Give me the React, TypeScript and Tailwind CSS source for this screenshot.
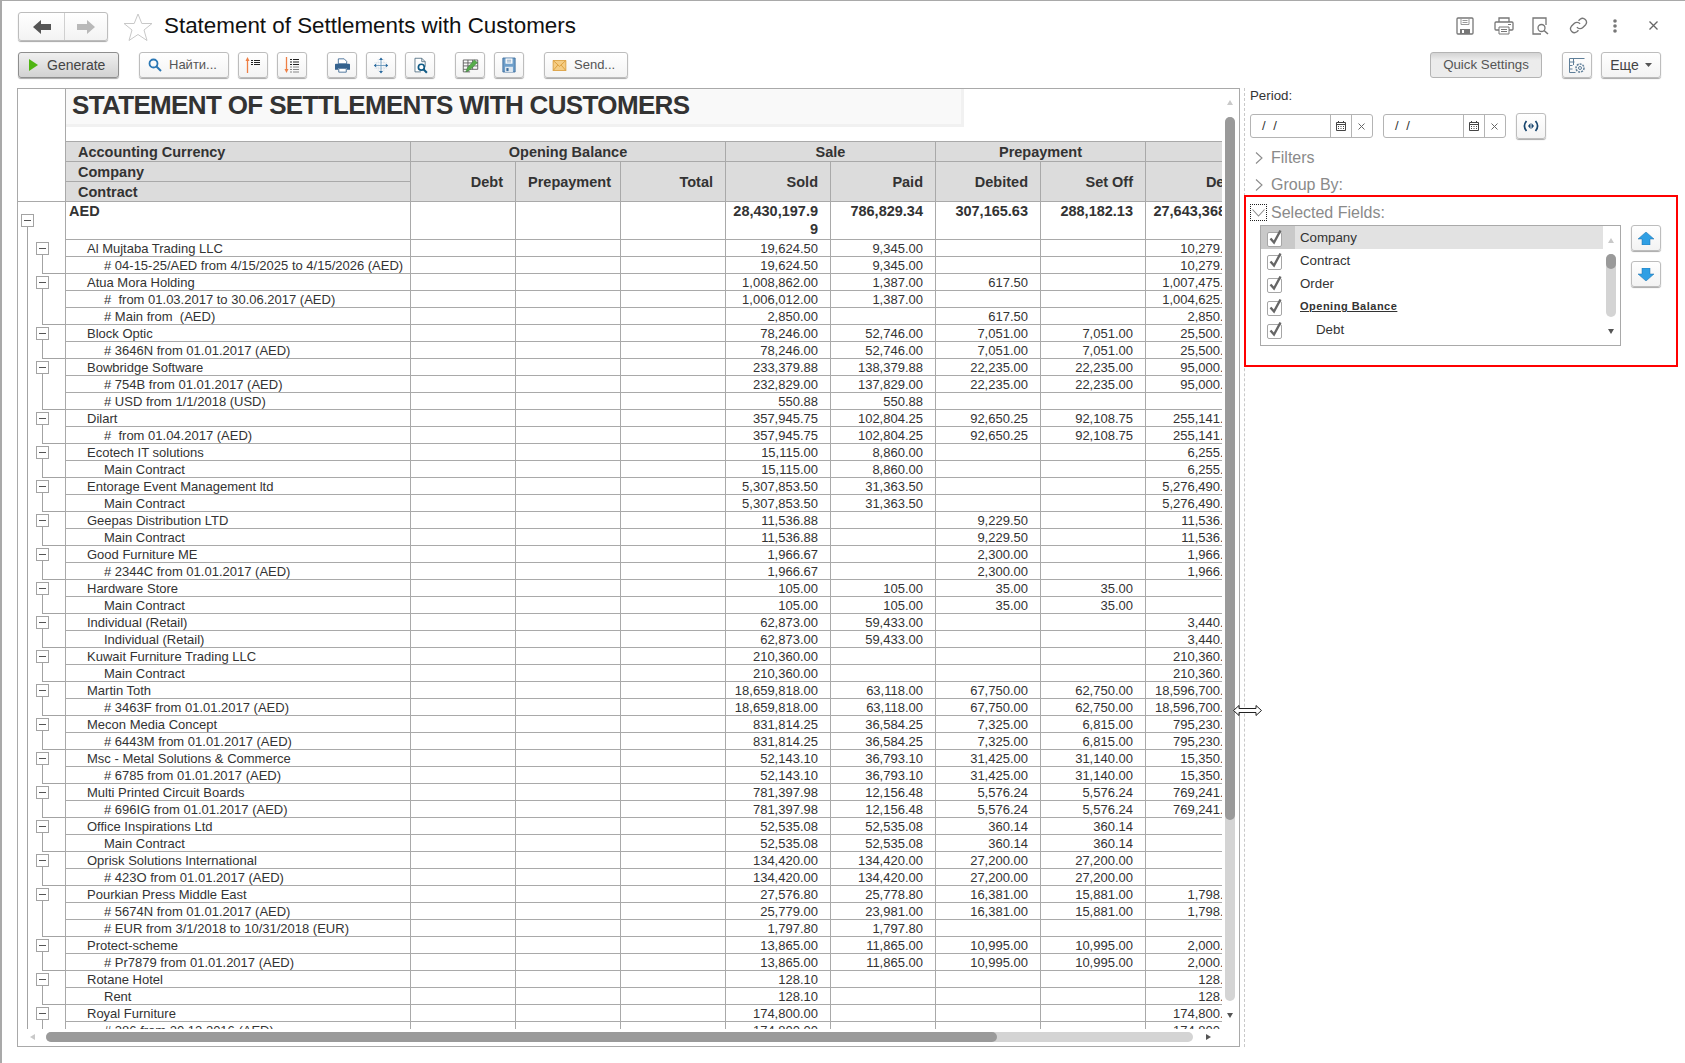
import type { ReactNode } from "react";

type Vals = [string, string, string, string, string];
type Group = { name: string; vals: Vals; kids: [string, Vals?][] };

const GROUPS: Group[] = [
  { name: "Al Mujtaba Trading LLC", vals: ["19,624.50", "9,345.00", "", "", "10,279.50"], kids: [["# 04-15-25/AED from 4/15/2025 to 4/15/2026 (AED)"]] },
  {
    name: "Atua Mora Holding",
    vals: ["1,008,862.00", "1,387.00", "617.50", "", "1,007,475.00"],
    kids: [
      ["#  from 01.03.2017 to 30.06.2017 (AED)", ["1,006,012.00", "1,387.00", "", "", "1,004,625.00"]],
      ["# Main from  (AED)", ["2,850.00", "", "617.50", "", "2,850.00"]],
    ],
  },
  { name: "Block Optic", vals: ["78,246.00", "52,746.00", "7,051.00", "7,051.00", "25,500.00"], kids: [["# 3646N from 01.01.2017 (AED)"]] },
  {
    name: "Bowbridge Software",
    vals: ["233,379.88", "138,379.88", "22,235.00", "22,235.00", "95,000.00"],
    kids: [
      ["# 754B from 01.01.2017 (AED)", ["232,829.00", "137,829.00", "22,235.00", "22,235.00", "95,000.00"]],
      ["# USD from 1/1/2018 (USD)", ["550.88", "550.88", "", "", ""]],
    ],
  },
  { name: "Dilart", vals: ["357,945.75", "102,804.25", "92,650.25", "92,108.75", "255,141.50"], kids: [["#  from 01.04.2017 (AED)"]] },
  { name: "Ecotech IT solutions", vals: ["15,115.00", "8,860.00", "", "", "6,255.00"], kids: [["Main Contract"]] },
  { name: "Entorage Event Management ltd", vals: ["5,307,853.50", "31,363.50", "", "", "5,276,490.00"], kids: [["Main Contract"]] },
  { name: "Geepas Distribution LTD", vals: ["11,536.88", "", "9,229.50", "", "11,536.88"], kids: [["Main Contract"]] },
  { name: "Good Furniture ME", vals: ["1,966.67", "", "2,300.00", "", "1,966.67"], kids: [["# 2344C from 01.01.2017 (AED)"]] },
  { name: "Hardware Store", vals: ["105.00", "105.00", "35.00", "35.00", ""], kids: [["Main Contract"]] },
  { name: "Individual (Retail)", vals: ["62,873.00", "59,433.00", "", "", "3,440.00"], kids: [["Individual (Retail)"]] },
  { name: "Kuwait Furniture Trading LLC", vals: ["210,360.00", "", "", "", "210,360.00"], kids: [["Main Contract"]] },
  { name: "Martin Toth", vals: ["18,659,818.00", "63,118.00", "67,750.00", "62,750.00", "18,596,700.00"], kids: [["# 3463F from 01.01.2017 (AED)"]] },
  { name: "Mecon Media Concept", vals: ["831,814.25", "36,584.25", "7,325.00", "6,815.00", "795,230.00"], kids: [["# 6443M from 01.01.2017 (AED)"]] },
  { name: "Msc - Metal Solutions & Commerce", vals: ["52,143.10", "36,793.10", "31,425.00", "31,140.00", "15,350.00"], kids: [["# 6785 from 01.01.2017 (AED)"]] },
  { name: "Multi Printed Circuit Boards", vals: ["781,397.98", "12,156.48", "5,576.24", "5,576.24", "769,241.50"], kids: [["# 696IG from 01.01.2017 (AED)"]] },
  { name: "Office Inspirations Ltd", vals: ["52,535.08", "52,535.08", "360.14", "360.14", ""], kids: [["Main Contract"]] },
  { name: "Oprisk Solutions International", vals: ["134,420.00", "134,420.00", "27,200.00", "27,200.00", ""], kids: [["# 423O from 01.01.2017 (AED)"]] },
  {
    name: "Pourkian Press Middle East",
    vals: ["27,576.80", "25,778.80", "16,381.00", "15,881.00", "1,798.00"],
    kids: [
      ["# 5674N from 01.01.2017 (AED)", ["25,779.00", "23,981.00", "16,381.00", "15,881.00", "1,798.00"]],
      ["# EUR from 3/1/2018 to 10/31/2018 (EUR)", ["1,797.80", "1,797.80", "", "", ""]],
    ],
  },
  { name: "Protect-scheme", vals: ["13,865.00", "11,865.00", "10,995.00", "10,995.00", "2,000.00"], kids: [["# Pr7879 from 01.01.2017 (AED)"]] },
  { name: "Rotane Hotel", vals: ["128.10", "", "", "", "128.10"], kids: [["Rent"]] },
  { name: "Royal Furniture", vals: ["174,800.00", "", "", "", "174,800.00"], kids: [["# 386 from 20.12.2016 (AED)"]] },
];

const LINE = "border-[#a9a9a9]";
const HEAD = `bg-[#dcdcdc] border-r border-b ${LINE} px-[12px] py-0 font-bold text-[14.5px] leading-[16px] text-[#333]`;
const CELL = `border-r border-b ${LINE} h-[17px] p-0 pr-[12px] pl-[4px] text-right text-[13px] leading-[15px] text-[#333] whitespace-nowrap overflow-hidden`;
const TOTAL = `border-r border-b ${LINE} h-[38px] p-0 pr-[12px] pl-[7px] align-top text-right font-bold text-[14.5px] leading-[18px] text-[#333] break-all`;

function Btn({ className = "", children }: { className?: string; children: ReactNode }) {
  return (
    <div
      className={`flex h-[26px] shrink-0 items-center justify-center rounded-[3px] border border-[#bdbdbd] bg-gradient-to-b from-white to-[#f3f3f3] shadow-[0_1px_1px_#a8a8a8] ${className}`}
    >
      {children}
    </div>
  );
}

function TreeLines() {
  const box = (y: number, x: number, key: string) => (
    <g key={key}>
      <rect x={x + 0.5} y={y - 5.5} width={12} height={12} rx={1} fill="#fff" stroke="#a3a3a3" />
      <path d={`M${x + 3} ${y + 0.5}h7`} stroke="#555" />
    </g>
  );
  const parts: ReactNode[] = [];
  let top = 151;
  GROUPS.forEach((g, i) => {
    const h = 17 * (g.kids.length + 1);
    parts.push(<path key={`l${i}`} d={`M24.5 ${top + 8}V${top + h - 0.5}H47`} stroke="#a3a3a3" fill="none" />);
    parts.push(box(top + 8, 18, `b${i}`));
    top += h;
  });
  return (
    <svg className="absolute left-0 top-0" width="47" height="940" shapeRendering="crispEdges">
      <path d="M9.5 137V940" stroke="#a3a3a3" />
      {parts}
      {box(131, 3, "root")}
    </svg>
  );
}

function NumCells({ vals }: { vals: Vals }) {
  return (
    <>
      <td className={CELL} />
      <td className={CELL} />
      <td className={CELL} />
      {vals.map((v, i) => (
        <td key={i} className={CELL}>
          {v}
        </td>
      ))}
    </>
  );
}

function ReportTable() {
  return (
    <table className="w-[1233px] table-fixed border-separate border-spacing-0">
      <colgroup>
        <col className="w-[48px]" />
        <col className="w-[345px]" />
        {[0, 1, 2, 3, 4, 5, 6, 7].map((i) => (
          <col key={i} className="w-[105px]" />
        ))}
      </colgroup>
      <tbody>
        <tr>
          <td rowSpan={4} className={`border-r border-b ${LINE} p-0`} />
          <td colSpan={9} className={`h-[53px] p-0 align-top border-b ${LINE}`}>
            <div className="h-[38px] w-[898px] border-r-[3px] border-b-[3px] border-[#f1f1f1] bg-[#f9f9f9] pl-[6px] text-[26px] font-bold leading-[33px] tracking-[-0.65px] text-[#333]">
              STATEMENT OF SETTLEMENTS WITH CUSTOMERS
            </div>
          </td>
        </tr>
        <tr className="h-[20px]">
          <td className={`${HEAD} text-left`}>Accounting Currency</td>
          <td colSpan={3} className={`${HEAD} text-center`}>Opening Balance</td>
          <td colSpan={2} className={`${HEAD} text-center`}>Sale</td>
          <td colSpan={2} className={`${HEAD} text-center`}>Prepayment</td>
          <td className={HEAD} />
        </tr>
        <tr className="h-[20px]">
          <td className={`${HEAD} text-left`}>Company</td>
          {["Debt", "Prepayment", "Total", "Sold", "Paid", "Debited", "Set Off", "Debt"].map((h, i) => (
            <td key={i} rowSpan={2} className={`${HEAD} text-right`}>
              {h}
            </td>
          ))}
        </tr>
        <tr className="h-[20px]">
          <td className={`${HEAD} text-left`}>Contract</td>
        </tr>
        <tr>
          <td className={`border-r ${LINE} p-0`} />
          <td className={`border-r border-b ${LINE} h-[38px] p-0 pl-[3px] align-top text-[14.5px] font-bold leading-[18px] text-[#333]`}>AED</td>
          <td className={TOTAL} />
          <td className={TOTAL} />
          <td className={TOTAL} />
          <td className={TOTAL}>28,430,197.99</td>
          <td className={TOTAL}>786,829.34</td>
          <td className={TOTAL}>307,165.63</td>
          <td className={TOTAL}>288,182.13</td>
          <td className={TOTAL}>27,643,368.65</td>
        </tr>
        {GROUPS.map((g) => (
          <GroupRows key={g.name} group={g} />
        ))}
      </tbody>
    </table>
  );
}

function GroupRows({ group }: { group: Group }) {
  return (
    <>
      <tr>
        <td className={`border-r ${LINE} p-0`} />
        <td className={`${CELL} !pl-[21px] !text-left`}>{group.name}</td>
        <NumCells vals={group.vals} />
      </tr>
      {group.kids.map(([name, vals], i) => (
        <tr key={i}>
          <td className={`border-r ${LINE} p-0`} />
          <td className={`${CELL} !pl-[38px] !text-left whitespace-pre`}>{name}</td>
          <NumCells vals={vals ?? group.vals} />
        </tr>
      ))}
    </>
  );
}

function Check() {
  return (
    <svg width="18" height="18" viewBox="0 0 18 18" className="shrink-0">
      <rect x="1.5" y="3.5" width="14" height="14" rx="1.5" fill="#fff" stroke="#a6a6a6" />
      <path d="M4.5 9.5l3.5 4L14.5 1.5" fill="none" stroke="#666" strokeWidth="2.400" />
    </svg>
  );
}

function FieldRow({ label, on, bold, indent }: { label: string; on?: boolean; bold?: boolean; indent?: boolean }) {
  return (
    <div className="flex h-[23px] shrink-0 items-center">
      <div className={`flex h-full w-[34px] shrink-0 items-center pl-[5px] ${on ? "bg-[#c9c9c9]" : ""}`}>
        <Check />
      </div>
      <div
        className={`flex h-full w-[308px] items-center text-[#333] ${on ? "bg-[#e2e2e2]" : ""} ${
          bold ? "text-[11px] font-bold tracking-[0.5px] underline" : "text-[13.3px]"
        } ${indent ? "pl-[21px]" : "pl-[5px]"}`}
      >
        {label}
      </div>
    </div>
  );
}

function DateField() {
  return (
    <div className="flex h-[24px] w-[123px] items-center rounded-[3px] border border-[#b4b4b4] bg-white text-[#333]">
      <div className="w-[79px] pl-[11px] text-[13px] tracking-[2px]">/ /</div>
      <div className="flex h-full w-[21px] items-center justify-center border-l border-[#b4b4b4]">
        <svg width="10" height="10" viewBox="0 0 10 10">
          <path d="M.5 1.5h9v8h-9zM0 3.5h10M2.5 0v2M7.5 0v2" fill="none" stroke="#444" />
          <path d="M2 5h1v1H2zM4.500 5h1v1h-1zM7 5h1v1H7zM2 7h1v1H2zM4.500 7h1v1h-1zM7 7h1v1H7z" fill="#444" />
        </svg>
      </div>
      <div className="flex h-full w-[20px] items-center justify-center border-l border-[#b4b4b4]">
        <svg width="7" height="7" viewBox="0 0 7 7">
          <path d="M.5.5l6 6M6.500.5l-6 6" stroke="#666" />
        </svg>
      </div>
    </div>
  );
}

function Chevron() {
  return (
    <svg width="8" height="12" viewBox="0 0 8 12" className="ml-[10px] mr-[8px] shrink-0">
      <path d="M1 .5L7 6 1 11.500" fill="none" stroke="#8c8c8c" strokeWidth="1.100" />
    </svg>
  );
}

function SettingsPanel() {
  return (
    <aside className="ml-[4px] flex h-[959px] w-[441px] flex-col border-l border-dashed border-[#c9c9c9]">
      <div className="ml-[5px] flex h-[16px] items-center text-[13.3px] text-[#333]">Period:</div>
      <div className="ml-[5px] mt-[9px] flex items-center">
        <DateField />
        <div className="ml-[10px]">
          <DateField />
        </div>
        <Btn className="ml-[10px] w-[30px]">
          <svg width="16" height="12" viewBox="0 0 16 12">
            <path d="M3.500 1C1 4 1 8 3.500 11M12.500 1c2.500 3 2.500 7 0 10" fill="none" stroke="#17456e" strokeWidth="1.700" />
            <path d="M7.500 3v6L5 6zM8.500 3v6L11 6z" fill="#17456e" />
          </svg>
        </Btn>
      </div>
      <div className="mt-[9px] flex h-[20px] items-center text-[16px] text-[#8a8a8a]">
        <Chevron />
        Filters
      </div>
      <div className="mt-[7px] flex h-[20px] items-center text-[16px] text-[#8a8a8a]">
        <Chevron />
        Group By:
      </div>
      <section className="-ml-px h-[172px] w-[434px] shrink-0 border-2 border-[#f00]">
        <div className="ml-[4px] mt-[7px] flex h-[17px] items-center text-[16px] text-[#8a8a8a]">
          <div className="flex h-[17px] w-[17px] shrink-0 items-center justify-center border border-dotted border-[#222]">
            <svg width="13" height="8" viewBox="0 0 13 8">
              <path d="M.5.5L6.500 7 12.500.5" fill="none" stroke="#8c8c8c" strokeWidth="1.100" />
            </svg>
          </div>
          <span className="ml-[4px]">Selected Fields:</span>
        </div>
        <div className="mt-[4px] flex">
          <div className="relative ml-[14px] flex h-[121px] w-[361px] flex-col overflow-hidden border border-[#a9a9a9] bg-white">
            <FieldRow label="Company" on />
            <FieldRow label="Contract" />
            <FieldRow label="Order" />
            <FieldRow label="Opening Balance" bold />
            <FieldRow label="Debt" indent />
            <FieldRow label="Prepayment" indent />
            <div className="absolute right-[4px] top-[28px] h-[63px] w-[10px] rounded-[5px] bg-[#d4d4d4]">
              <div className="h-[15px] rounded-[5px] bg-[#9a9a9a]" />
            </div>
            <svg className="absolute right-[6px] top-[12px]" width="6" height="5">
              <path d="M3 0l3 5H0z" fill="#c9c9c9" />
            </svg>
            <svg className="absolute right-[6px] top-[103px]" width="6" height="5">
              <path d="M0 0h6L3 5z" fill="#555" />
            </svg>
          </div>
          <div className="ml-[10px] flex flex-col gap-[10px]">
            <Btn className="w-[30px]">
              <svg width="16" height="13" viewBox="0 0 16 13">
                <path d="M8 0l8 7h-4v6H4V7H0z" fill="#2f9fe4" stroke="#1c6fa8" strokeWidth="0.500" />
              </svg>
            </Btn>
            <Btn className="w-[30px]">
              <svg width="16" height="13" viewBox="0 0 16 13">
                <path d="M8 13L0 6h4V0h8v6h4z" fill="#2f9fe4" stroke="#1c6fa8" strokeWidth="0.500" />
              </svg>
            </Btn>
          </div>
        </div>
      </section>
    </aside>
  );
}

function ToolbarIcons() {
  return (
    <>
      <Btn className="ml-[9px] w-[30px]">
        <svg width="20" height="20" viewBox="0 0 20 20">
          <path d="M4.500 18V5" stroke="#ee7f45" strokeWidth="1.300" />
          <path d="M2.500 6l2-4 2 4z" fill="#ee7f45" />
          <path d="M8 5.500h2M8 7.500h2M8 9.500h2M11 5.500h6M11 7.500h6M11 9.500h6" stroke="#222" />
        </svg>
      </Btn>
      <Btn className="ml-[9px] w-[30px]">
        <svg width="20" height="20" viewBox="0 0 20 20">
          <path d="M4.500 2v13" stroke="#ee7f45" strokeWidth="1.300" />
          <path d="M2.500 14l2 4 2-4z" fill="#ee7f45" />
          <path d="M8 4.500h2M8 7h2M8 9.500h2M11 4.500h6M11 7h6M11 9.500h6" stroke="#222" />
          <path d="M8 12h2M8 14.500h2M8 17h2M11 12h6M11 14.500h6M11 17h6" stroke="#888" />
        </svg>
      </Btn>
      <Btn className="ml-[20px] w-[30px]">
        <svg width="17" height="15" viewBox="0 0 20 18">
          <path d="M5 1h7l3 3v3H5z" fill="#fff" stroke="#34628e" />
          <path d="M2 7h16a1 1 0 011 1v6h-4v-2H5v2H1V8a1 1 0 011-1z" fill="#34628e" />
          <path d="M5.500 12.500h9v4.500h-9z" fill="#fff" stroke="#34628e" />
        </svg>
      </Btn>
      <Btn className="ml-[9px] w-[30px]">
        <svg width="16" height="17" viewBox="0 0 20 20">
          <path d="M6.500 2v16M13.500 2v16M2 6.500h16M2 13.500h16" stroke="#c9d6e2" strokeDasharray="1 1" />
          <path d="M10 1v18M2 10h16" stroke="#5c8fb8" />
          <path d="M10 0l2.500 3h-5zM10 20l2.500-3h-5zM1 10l3-2.500v5zM19 10l-3-2.500v5z" fill="#2a6a9e" />
        </svg>
      </Btn>
      <Btn className="ml-[9px] w-[30px]">
        <svg width="17" height="17" viewBox="0 0 20 20">
          <path d="M3.500 1.500h8l4 4v6M3.500 1.500v16h7" fill="#fff" stroke="#4d6b80" />
          <path d="M11.500 1.500v4h4" fill="none" stroke="#4d6b80" />
          <circle cx="11" cy="12" r="3.500" fill="#fff" stroke="#0f5a85" strokeWidth="2" />
          <path d="M13.500 14.500L17.500 18.500" stroke="#0f5a85" strokeWidth="2.400" />
        </svg>
      </Btn>
      <Btn className="ml-[20px] w-[30px]">
        <svg width="17" height="17" viewBox="0 0 20 20">
          <path d="M1.500 3.500h17v11h-17zM1.500 7h17M1.500 10.500h17M7 3.500v14M12.500 3.500v11M1.500 14.500v3h8" fill="none" stroke="#555" />
          <path d="M4.500 17.500l2-5 8-9 3.500 3-8.500 8.500z" fill="#57ad4a" stroke="#2e7d32" strokeWidth="0.600" />
        </svg>
      </Btn>
      <Btn className="ml-[9px] w-[30px]">
        <svg width="14" height="16" viewBox="0 0 16 18">
          <path d="M1 1h14v16H1z" fill="#6f9fca" stroke="#3f6f9e" />
          <path d="M4 1.500h8v6H4z" fill="#fff" />
          <path d="M5.500 3.500h5M5.500 5.500h5" stroke="#7a9ab8" />
          <path d="M3.500 11h9v6h-9z" fill="#dfe8f0" />
          <path d="M5 12.500h2.500V16H5z" fill="#3f6f9e" />
        </svg>
      </Btn>
    </>
  );
}

export default function App() {
  return (
    <div className="flex h-[1063px] w-[1685px] flex-col overflow-hidden border-l-2 border-t border-[#a9a9a9] bg-white pt-[11px] font-['Liberation_Sans',Arial,sans-serif]">
      <header className="flex h-[29px] shrink-0 items-center pl-[16px] pr-[27px]">
        <div className="flex h-[29px] w-[90px] items-center rounded-[3px] border border-[#bdbdbd] bg-gradient-to-b from-white to-[#f3f3f3] shadow-[0_1px_1px_#a8a8a8]">
          <div className="flex h-full w-[46px] items-center justify-center border-r border-[#d0d0d0]">
            <svg width="18" height="14" viewBox="0 0 18 14">
              <path d="M0 7l8-7v4h10v6H8v4z" fill="#555" />
            </svg>
          </div>
          <div className="flex h-full flex-1 items-center justify-center">
            <svg width="18" height="14" viewBox="0 0 18 14">
              <path d="M18 7l-8-7v4H0v6h10v4z" fill="#b9b9b9" />
            </svg>
          </div>
        </div>
        <svg width="30" height="28" viewBox="0 0 30 28" className="ml-[15px] shrink-0">
          <path d="M15 1l3.800 9.500H29l-8 6.500 3 10.500-9-6-9 6L9 17l-8-6.500h10.200z" fill="#fff" stroke="#c8c8c8" />
        </svg>
        <h1 className="-mt-[2px] ml-[11px] text-[22.4px] font-normal leading-[28px] text-[#111]">Statement of Settlements with Customers</h1>
        <div className="-mt-[2px] ml-auto flex items-center">
          <svg width="18" height="18" viewBox="0 0 18 18">
            <path d="M1 2a1 1 0 011-1h14a1 1 0 011 1v14a1 1 0 01-1 1H2a1 1 0 01-1-1z" fill="none" stroke="#777" strokeWidth="1.300" />
            <path d="M5 1.500h8v6H5zM6.500 3.500h5M6.500 5.500h5" fill="none" stroke="#999" />
            <path d="M4 12h10v5H4z" fill="#777" />
            <path d="M6 13h2v3H6z" fill="#fff" />
          </svg>
          <svg width="20" height="18" viewBox="0 0 20 18" className="ml-[20px]">
            <path d="M5 5V1h10v4M5 13H2a1 1 0 01-1-1V6a1 1 0 011-1h16a1 1 0 011 1v6a1 1 0 01-1 1h-3" fill="none" stroke="#777" strokeWidth="1.300" />
            <path d="M5 10h10v7H5zM7 12.500h6M7 14.500h6" fill="none" stroke="#777" />
            <path d="M14 7.500h3" stroke="#777" />
          </svg>
          <svg width="18" height="18" viewBox="0 0 18 18" className="ml-[17px]">
            <path d="M10 17H2V1h13v7" fill="none" stroke="#777" strokeWidth="1.300" />
            <circle cx="10.500" cy="11" r="3.500" fill="none" stroke="#777" strokeWidth="1.300" />
            <path d="M13 13.500l4 3.500" stroke="#777" strokeWidth="1.600" />
          </svg>
          <svg width="19" height="19" viewBox="0 0 24 24" className="ml-[20px]" fill="none" stroke="#777" strokeWidth="1.700">
            <path d="M10 14a5 5 0 007.500.5l3.500-3.500a5 5 0 00-7-7l-2 2" />
            <path d="M14 10a5 5 0 00-7.500-.5L3 13a5 5 0 007 7l2-2" />
          </svg>
          <svg width="4" height="14" viewBox="0 0 4 14" className="ml-[25px]">
            <circle cx="2" cy="2" r="1.800" fill="#777" />
            <circle cx="2" cy="7" r="1.800" fill="#777" />
            <circle cx="2" cy="12" r="1.800" fill="#777" />
          </svg>
          <svg width="9" height="9" viewBox="0 0 9 9" className="ml-[32px]">
            <path d="M.5.5l8 8M8.500.5l-8 8" stroke="#666" strokeWidth="1.300" />
          </svg>
        </div>
      </header>

      <nav className="mt-[11px] flex h-[26px] shrink-0 items-center pl-[16px] pr-[24px] text-[13px] text-[#555]">
        <div className="flex h-[26px] w-[101px] shrink-0 items-center rounded-[3px] border border-[#8e8e8e] bg-gradient-to-b from-[#f0f0f0] to-[#d2d2d2] pl-[10px] text-[14px] text-[#444] shadow-[0_1px_1px_#a8a8a8]">
          <svg width="9" height="12" viewBox="0 0 9 12">
            <path d="M0 0l9 6-9 6z" fill="#4fb512" />
          </svg>
          <span className="ml-[9px]">Generate</span>
        </div>
        <Btn className="ml-[20px] w-[90px] !justify-start pl-[8px]">
          <svg width="14" height="14" viewBox="0 0 14 14">
            <circle cx="5.500" cy="5.500" r="4" fill="none" stroke="#2a77b5" strokeWidth="1.800" />
            <path d="M8.500 8.500l4.500 4.500" stroke="#2a77b5" strokeWidth="2" />
          </svg>
          <span className="ml-[7px]">Найти...</span>
        </Btn>
        <ToolbarIcons />
        <Btn className="ml-[20px] w-[84px] !justify-start pl-[7px]">
          <svg width="15" height="11" viewBox="0 0 16 13">
            <path d="M.5.5h15v12H.5z" fill="#f5cd84" stroke="#d99a35" />
            <path d="M.5.5L8 7.500 15.500.5M.5 12.500L6 6M15.500 12.500L10 6" fill="none" stroke="#d99a35" />
          </svg>
          <span className="ml-[7px]">Send...</span>
        </Btn>
        <div className="ml-auto flex h-[26px] w-[112px] items-center justify-center rounded-[3px] border border-[#b4b4b4] bg-gradient-to-b from-[#d4d4d4] to-[#ececec] to-30% text-[13.3px] text-[#555]">
          Quick Settings
        </div>
        <Btn className="ml-[20px] w-[30px]">
          <svg width="17" height="17" viewBox="0 0 17 17" fill="none" stroke="#5f7f99">
            <path d="M.5 1.500h15M.5 1.500v14h6M.5 5h5M.5 8.500h3M.5 12h3M4.500 1.500V8" />
            <circle cx="11" cy="11" r="4" strokeDasharray="2 1" strokeWidth="1.500" />
            <circle cx="11" cy="11" r="1.500" />
          </svg>
        </Btn>
        <Btn className="ml-[9px] w-[60px] text-[14px] text-[#444]">
          Еще
          <svg width="7" height="4" viewBox="0 0 7 4" className="ml-[6px]">
            <path d="M0 0h7L3.500 4z" fill="#555" />
          </svg>
        </Btn>
      </nav>

      <main className="mt-[10px] flex shrink-0 pl-[15px]">
        <div className={`relative h-[959px] w-[1223px] shrink-0 border ${LINE} bg-white`}>
          <div className="relative h-[940px] w-[1204px] overflow-hidden">
            <ReportTable />
            <TreeLines />
          </div>

          <div className="absolute left-[1207px] top-[28px] h-[884px] w-[10px] rounded-[5px] bg-[#d4d4d4]">
            <div className="h-[703px] rounded-[5px] bg-[#9a9a9a]" />
          </div>
          <svg className="absolute left-[1209px] top-[11px]" width="6" height="5">
            <path d="M3 0l3 5H0z" fill="#c9c9c9" />
          </svg>
          <svg className="absolute left-[1209px] top-[924px]" width="6" height="5">
            <path d="M0 0h6L3 5z" fill="#555" />
          </svg>
          <div className="absolute left-[28px] top-[943px] h-[10px] w-[1147px] rounded-[5px] bg-[#d4d4d4]">
            <div className="h-full w-[951px] rounded-[5px] bg-[#9a9a9a]" />
          </div>
          <svg className="absolute left-[12px] top-[945px]" width="5" height="6">
            <path d="M0 3l5-3v6z" fill="#c9c9c9" />
          </svg>
          <svg className="absolute left-[1188px] top-[945px]" width="5" height="6">
            <path d="M5 3L0 0v6z" fill="#555" />
          </svg>
          <svg className="absolute left-[1215px] top-[616px] z-10" width="29" height="11" viewBox="0 0 29 11">
            <path d="M.5 5.500L6 .5v3h17v-3l5.500 5-5.500 5v-3H6v3z" fill="#fff" stroke="#222" />
          </svg>
        </div>
        <SettingsPanel />
      </main>
    </div>
  );
}
